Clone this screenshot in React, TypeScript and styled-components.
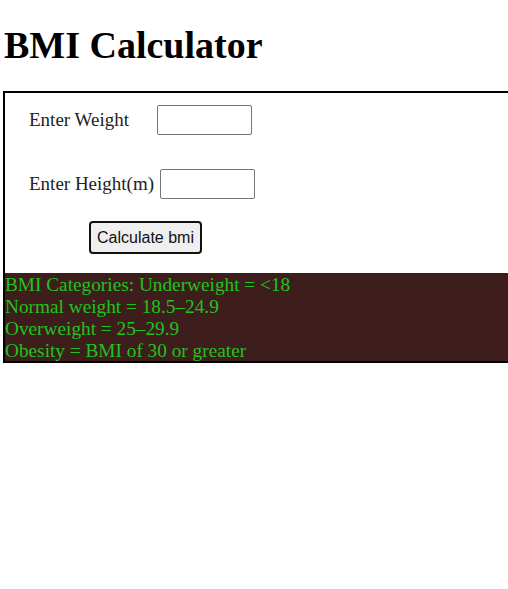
import React from "react";
import styled, { createGlobalStyle } from "styled-components";

const Global = createGlobalStyle`
  html, body { margin: 0; padding: 0; background: #fff; }
  body { font-family: "Liberation Serif", "Times New Roman", serif; }
`;

const Page = styled.div`
  padding: 0 0 0 3px;
`;

const Title = styled.h1`
  margin: 0;
  padding: 24px 0 25px 1px;
  font-family: "Liberation Serif", serif;
  font-weight: bold;
  font-size: 38px;
  line-height: 42px;
  color: #000;
`;

const Card = styled.div`
  border: 2px solid #000;
  border-right: none;
  box-sizing: border-box;
`;

const Form = styled.div`
  display: flex;
  flex-direction: column;
  padding: 12px 0 19px 24px;
`;

const Row = styled.div<{ $gap: number; $mt?: number }>`
  display: flex;
  align-items: center;
  gap: ${(p) => p.$gap}px;
  margin-top: ${(p) => p.$mt ?? 0}px;
`;

const Label = styled.label`
  font-family: "Liberation Serif", serif;
  font-size: 19px;
  color: #222;
`;

const Input = styled.input`
  width: 95px;
  height: 30px;
  box-sizing: border-box;
  border: 1px solid #767676;
  border-radius: 2px;
  margin: 0;
  padding: 0 4px;
  background: #fff;
`;

const Button = styled.button`
  align-self: flex-start;
  margin: 22px 0 0 60px;
  width: 113px;
  height: 33px;
  box-sizing: border-box;
  border: 2px solid #111;
  border-radius: 4px;
  background: #efefef;
  font-family: "Liberation Sans", Arial, sans-serif;
  font-size: 16px;
  color: #111;
  padding: 0;
`;

const Info = styled.div`
  background: #3e1d1d;
  color: #1ec31e;
  font-family: "Liberation Serif", serif;
  font-size: 19.3px;
  line-height: 22px;
  padding: 1px 0 0 0;
  height: 88px;
  box-sizing: border-box;
`;

export default function App() {
  return (
    <>
      <Global />
      <Page>
        <Title>BMI Calculator</Title>
        <Card>
          <Form>
            <Row $gap={28}>
              <Label>Enter Weight</Label>
              <Input type="text" />
            </Row>
            <Row $gap={6} $mt={34}>
              <Label>Enter Height(m)</Label>
              <Input type="text" />
            </Row>
            <Button>Calculate bmi</Button>
          </Form>
          <Info>
            BMI Categories: Underweight = &lt;18
            <br />
            Normal weight = 18.5–24.9
            <br />
            Overweight = 25–29.9
            <br />
            Obesity = BMI of 30 or greater
          </Info>
        </Card>
      </Page>
    </>
  );
}
